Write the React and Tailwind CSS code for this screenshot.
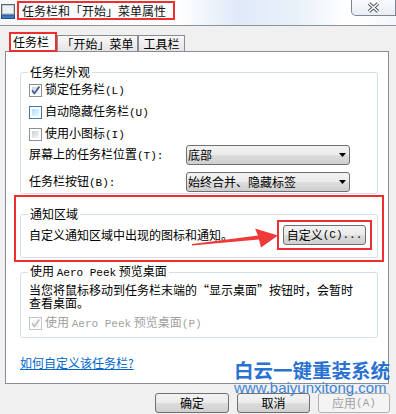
import React from "react";

const L = ({ children }) => (
  <span className="font-['Liberation_Mono',monospace] text-[11px]">{children}</span>
);

function Checkbox({ checked = false, hover = false, disabled = false }) {
  const border = disabled
    ? "border-[#c5c5c5]"
    : hover
    ? "border-[#3d7bad]"
    : "border-[#8e8f8f]";
  const inner = disabled
    ? "bg-[#f4f4f4]"
    : hover
    ? "bg-[linear-gradient(135deg,#b4dffb,#eaf6fd)]"
    : "bg-[linear-gradient(135deg,#cdd0d4,#f7f7f7)]";
  return (
    <span className={`relative block w-[13px] h-[13px] shrink-0 border ${border} bg-white p-[2px]`}>
      <span className={`block w-full h-full ${inner}`} />
      {checked && (
        <svg className="absolute inset-0" width="11" height="11" viewBox="0 0 11 11">
          <path
            d="M2 5.2 L4.4 8.4 L9.4 1.4"
            fill="none"
            stroke={disabled ? "#bdbdbd" : "#3b5690"}
            strokeWidth="1.7"
          />
        </svg>
      )}
    </span>
  );
}

function CheckRow({ children, ...props }) {
  return (
    <div className="h-[22px] flex items-center gap-[3px] pl-[8px]">
      <Checkbox {...props} />
      <span>{children}</span>
    </div>
  );
}

function Combo({ children }) {
  return (
    <div className="w-[164px] h-[20px] flex items-center justify-between rounded-[3px] border border-[#707070] bg-[linear-gradient(#f2f2f2,#ebebeb_50%,#dddddd_50%,#cfcfcf)] pl-[1px] pr-[3px]">
      <span>{children}</span>
      <svg width="7" height="4" viewBox="0 0 7 4">
        <path d="M0 0 H7 L3.5 4 Z" fill="#000" />
      </svg>
    </div>
  );
}

function Button({ children, disabled = false, className = "" }) {
  return (
    <div
      className={`h-[20px] flex items-center justify-center rounded-[3px] border ${
        disabled
          ? "border-[#adb2b5] bg-[#f4f4f4] text-[#a0a0a0]"
          : "border-[#707070] bg-[linear-gradient(#f2f2f2,#ebebeb_50%,#dddddd_50%,#cfcfcf)] text-black"
      } ${className}`}
    >
      {children}
    </div>
  );
}

export default function App() {
  return (
    <div className="relative w-[396px] h-[414px] overflow-hidden bg-[#f0f0f0] text-[12px] leading-[14px] text-black font-['Noto_Sans_CJK_SC',sans-serif]">
      {/* Title bar */}
      <div className="h-[26px] flex items-start border-b border-[#8e9398] bg-[linear-gradient(to_right,#f6f8fa,#ffffff_45%,#dfeaf8_60%,#e9f1fa_75%,#ffffff_88%,#f4f7fa)]">
        <svg className="mt-[4px] ml-[1px]" width="14" height="15" viewBox="0 0 14 15">
          <rect x="0.5" y="0.5" width="13" height="12" fill="#c9ced4" stroke="#5d6670" />
          <rect x="2" y="2" width="10" height="7" fill="#eef1f4" />
          <rect x="0.5" y="11" width="13" height="3.5" fill="#3a78c4" stroke="#284f86" />
        </svg>
        <div className="ml-[2px] mt-[1px] h-[19px] w-[158px] border-2 border-[#ee2f2f] pl-[3px] flex items-center text-[#111]">
          任务栏和「开始」菜单属性
        </div>
        <div className="ml-auto w-[45px] h-[16px] border border-t-0 border-[#7c8592] rounded-bl-[5px] flex items-center justify-center bg-[linear-gradient(#f8fafc,#e9eef4)]">
          <svg width="13" height="11" viewBox="0 0 13 11">
            <path d="M2 1.5 L11 9.5 M11 1.5 L2 9.5" stroke="#4a4f57" strokeWidth="3.4" />
            <path d="M2 1.5 L11 9.5 M11 1.5 L2 9.5" stroke="#ffffff" strokeWidth="1.6" />
          </svg>
        </div>
      </div>

      {/* Tabs */}
      <div className="mt-[6px] h-[19px] flex items-end pl-[9px]">
        <div className="relative z-10 -mb-px w-[48px] h-[20px] border-2 border-[#ee2f2f] bg-white flex items-center pl-[2px]">
          任务栏
        </div>
        <div className="w-[81px] h-[16px] border border-b-0 border-[#898c95] bg-[linear-gradient(#f8f8f8,#e4e4e4)] flex items-center justify-center">
          「开始」菜单
        </div>
        <div className="w-[47px] h-[16px] border border-b-0 border-[#898c95] bg-[linear-gradient(#f8f8f8,#e4e4e4)] flex items-center justify-center">
          工具栏
        </div>
      </div>

      {/* Panel */}
      <div className="ml-[5px] w-[384px] h-[333px] border border-[#898c95] bg-white">
        <fieldset className="ml-[14px] mt-[13px] w-[358px] border border-[#d5dfe5] rounded-[3px] pb-[1px]">
          <legend className="ml-[7px] px-[2px] leading-[14px]">任务栏外观</legend>
          <CheckRow checked>
            锁定任务栏<L>(L)</L>
          </CheckRow>
          <CheckRow hover>
            自动隐藏任务栏<L>(U)</L>
          </CheckRow>
          <CheckRow>
            使用小图标<L>(I)</L>
          </CheckRow>
          <div className="h-[20px] flex items-center pl-[8px]">
            <span className="w-[157px]">
              屏幕上的任务栏位置<L>(T):</L>
            </span>
            <Combo>底部</Combo>
          </div>
          <div className="mt-[7px] h-[20px] flex items-center pl-[8px]">
            <span className="w-[157px]">
              任务栏按钮<L>(B):</L>
            </span>
            <Combo>始终合并、隐藏标签</Combo>
          </div>
        </fieldset>

        <div className="ml-[8px] mt-[1px] w-[370px] border-2 border-[#ee2f2f]">
          <fieldset className="ml-[4px] mt-[10px] mb-[2px] w-[358px] border border-[#d5dfe5] rounded-[3px] pb-[8px]">
            <legend className="ml-[7px] px-[2px] leading-[14px]">通知区域</legend>
            <div className="h-[28px] flex items-center pl-[8px] pr-[5px]">
              <span>自定义通知区域中出现的图标和通知。</span>
              <div className="ml-auto border-2 border-[#ee2f2f] px-[4px] py-[3px]">
                <Button className="w-[83px]">
                  自定义<L>(C)...</L>
                </Button>
              </div>
            </div>
          </fieldset>
        </div>

        <fieldset className="ml-[14px] mt-[2px] w-[358px] border border-[#d5dfe5] rounded-[3px]">
          <legend className="ml-[7px] px-[2px] leading-[14px]">
            使用 <L>Aero Peek</L> 预览桌面
          </legend>
          <p className="pt-[3px] pl-[8px] leading-[13px]">
            当您将鼠标移动到任务栏末端的“显示桌面”按钮时，会暂时
            <br />
            查看桌面。
          </p>
          <div className="h-[28px] flex items-center gap-[3px] pl-[8px] text-[#a0a0a0]">
            <Checkbox checked disabled />
            <span>
              使用 <L>Aero Peek</L> 预览桌面<L>(P)</L>
            </span>
          </div>
        </fieldset>

        <div className="ml-[14px] mt-[18px]">
          <span className="text-[#0066cc] underline">如何自定义该任务栏?</span>
        </div>
      </div>

      {/* Dialog buttons */}
      <div className="mt-[9px] flex justify-end gap-[8px] pr-[6px]">
        <Button className="w-[74px]">确定</Button>
        <Button className="w-[73px]">取消</Button>
        <Button className="w-[72px]" disabled>
          应用<L>(A)</L>
        </Button>
      </div>

      {/* Watermark */}
      <div className="absolute left-[234px] top-[359px] text-[#2a72d2] pointer-events-none">
        <div className="text-[19.5px] leading-[22px] font-bold">白云一键重装系统</div>
        <div className="font-['Liberation_Sans',sans-serif] text-[15px] leading-[13px] text-[#3c83d6]">
          www.baiyunxitong.com
        </div>
      </div>

      {/* Red arrow */}
      <svg
        className="absolute left-[190px] top-[224px] pointer-events-none"
        width="92"
        height="26"
        viewBox="190 224 92 26"
      >
        <polygon
          points="192,244 258,235.5 255,228.5 278,235.5 261,247.5 259,239.5 192,245.5"
          fill="#f03a3a"
        />
      </svg>
    </div>
  );
}
